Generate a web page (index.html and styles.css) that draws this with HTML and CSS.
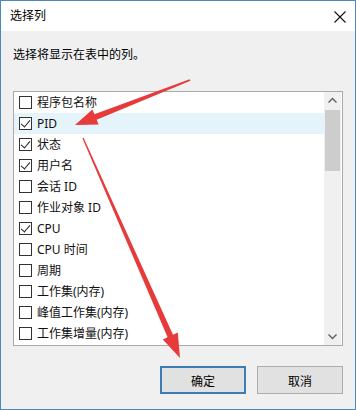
FILE: index.html
```html
<!doctype html>
<html lang="zh-CN">
<head>
<meta charset="UTF-8">
<title>选择列</title>
<link rel="stylesheet" href="styles.css">
</head>
<body>
<div class="window">
	<div class="titlebar">
		<span class="title">选择列</span>
		<svg class="close" width="12" height="12" viewBox="0 0 12 12"><path d="M0.5 0.5L11.5 11.5M11.5 0.5L0.5 11.5" stroke="#111" stroke-width="1.1" fill="none"/></svg>
	</div>
	<div class="content">
		<p class="hint">选择将显示在表中的列。</p>
		<div class="listbox">
			<ul class="rows">
				<li><span class="chk"></span>程序包名称</li>
				<li class="hover"><span class="chk on"></span>PID</li>
				<li><span class="chk on"></span>状态</li>
				<li><span class="chk on"></span>用户名</li>
				<li><span class="chk"></span>会话 ID</li>
				<li><span class="chk"></span>作业对象 ID</li>
				<li><span class="chk on"></span>CPU</li>
				<li><span class="chk"></span>CPU 时间</li>
				<li><span class="chk"></span>周期</li>
				<li><span class="chk"></span>工作集(内存)</li>
				<li><span class="chk"></span>峰值工作集(内存)</li>
				<li><span class="chk"></span>工作集增量(内存)</li>
			</ul>
			<div class="scrollbar">
				<svg class="arrow-btn" width="17" height="17" viewBox="0 0 17 17"><path d="M4.5 10.5L8.5 6.5L12.5 10.5" stroke="#606060" stroke-width="1.4" fill="none"/></svg>
				<div class="track"><div class="thumb"></div></div>
				<svg class="arrow-btn" width="17" height="17" viewBox="0 0 17 17"><path d="M4.5 6.5L8.5 10.5L12.5 6.5" stroke="#606060" stroke-width="1.4" fill="none"/></svg>
			</div>
		</div>
		<div class="buttons">
			<button class="btn default">确定</button>
			<button class="btn">取消</button>
		</div>
	</div>
	<svg class="marks" width="356" height="410" viewBox="0 0 356 410">
		<polygon fill="#e63a3b" points="189.6,79.2 94.4,114.2 92.4,109.4 75,125 98.6,124.6 96.6,119.8 190.4,80.8"/>
		<polygon fill="#e63a3b" points="83.6,137.8 173,334.8 177.8,332.6 180,358 162.8,339.4 167.6,337.2 82.4,138.2"/>
	</svg>
</div>
</body>
</html>
```
FILE: styles.css
```css
*{
	padding:0;
	margin:0;
	box-sizing:border-box;
}
body{
	font-family:'Noto Sans','Noto Sans CJK SC',sans-serif;
	font-size:12px;
	color:#000;
	background:#fff;
}
.window{
	position:relative;
	width:356px;
	height:410px;
	border:1px solid #4a88bd;
	display:flex;
	flex-direction:column;
	overflow:hidden;
}
.titlebar{
	height:30px;
	background:#fff;
	display:flex;
	align-items:center;
	justify-content:space-between;
	padding:0 9px 0 9px;
}
.title{
	font-size:12px;
	line-height:16px;
}
.close{
	margin-top:1px;
}
.content{
	flex:1;
	background:#f0f0f0;
	padding:0 12px;
	display:flex;
	flex-direction:column;
}
.hint{
	margin-top:16px;
	line-height:16px;
	font-size:12px;
}
.listbox{
	margin-top:28px;
	height:255px;
	border:1px solid #a9a9a9;
	background:#fff;
	display:flex;
}
.rows{
	flex:1;
	list-style:none;
}
.rows li{
	height:21px;
	display:flex;
	align-items:center;
	padding-left:5px;
	gap:5px;
	line-height:16px;
	color:#111;
}
.rows li.hover{
	background:#e5f3fb;
}
.chk{
	width:13px;
	height:13px;
	border:1px solid #333;
	background:#fff;
	position:relative;
	flex:none;
}
.chk.on::after{
	content:'';
	position:absolute;
	left:3px;
	top:0px;
	width:4px;
	height:8px;
	border:solid #222;
	border-width:0 1px 1px 0;
	transform:rotate(40deg);
}
.scrollbar{
	width:17px;
	background:#f0f0f0;
	display:flex;
	flex-direction:column;
	margin-right:1px;
}
.arrow-btn{
	flex:none;
	display:block;
}
.track{
	flex:1;
	padding:1px 1px;
}
.thumb{
	height:61px;
	background:#cdcdcd;
}
.buttons{
	display:flex;
	justify-content:flex-end;
	gap:11px;
	margin-top:20px;
}
.btn{
	width:86px;
	height:28px;
	font-family:'Noto Sans CJK SC',sans-serif;
	font-size:12px;
	background:#e1e1e1;
	border:1px solid #adadad;
	color:#000;
}
.btn.default{
	border:2px solid #3c7db3;
}
.marks{
	position:absolute;
	left:-1px;
	top:-1px;
	pointer-events:none;
}
```
